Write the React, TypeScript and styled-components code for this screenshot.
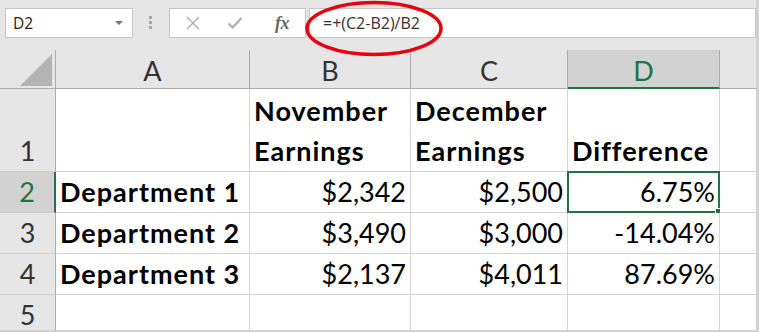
import React from 'react';
import styled, { createGlobalStyle } from 'styled-components';

const GREEN = '#217346';

const Global = createGlobalStyle`
  html, body { margin: 0; padding: 0; background: #fff; }
  * { box-sizing: border-box; }
`;

const Frame = styled.div`
  position: relative;
  width: 759px;
  height: 332px;
  overflow: hidden;
  border-right: 3px solid #d1d1d1;
  border-bottom: 2px solid #d1d1d1;
  background: #fff;
`;

const Toolbar = styled.div`
  display: flex;
  align-items: flex-start;
  height: 50px;
  padding: 8px 0 0 5px;
  background: #e6e6e6;
  font-family: 'Open Sans', 'Noto Sans', sans-serif;
`;

const NameBox = styled.div`
  display: flex;
  align-items: center;
  justify-content: space-between;
  width: 128px;
  height: 30px;
  padding: 0 9px 0 7px;
  background: #fff;
  border: 1px solid #c6c6c6;
  font-size: 15.5px;
  color: #222;
`;

const DropArrow = styled.span`
  width: 0;
  height: 0;
  border-left: 4px solid transparent;
  border-right: 4px solid transparent;
  border-top: 4px solid #777;
`;

const Grip = styled.div`
  display: flex;
  flex-direction: column;
  gap: 2px;
  margin: 8px 0 0 16px;
`;

const GripDot = styled.span`
  width: 3px;
  height: 3px;
  background: #a9a9a9;
`;

const ButtonsBox = styled.div`
  display: flex;
  align-items: center;
  width: 137px;
  height: 30px;
  margin-left: 17px;
  padding-left: 13px;
  background: #fff;
  border: 1px solid #c6c6c6;
`;

const IconSlot = styled.span<{ $gap?: number }>`
  display: flex;
  align-items: center;
  justify-content: center;
  width: 20px;
  height: 24px;
  margin-left: ${(p) => p.$gap ?? 0}px;
`;

const FxLabel = styled.span`
  font-family: 'Liberation Serif', 'DejaVu Serif', serif;
  font-style: italic;
  font-weight: 700;
  font-size: 18px;
  color: #6a6a6a;
  letter-spacing: -0.5px;
`;

const FormulaBox = styled.div`
  flex: 1;
  display: flex;
  align-items: center;
  height: 30px;
  margin-left: 3px;
  padding-left: 13px;
  background: #fff;
  border: 1px solid #c6c6c6;
  font-size: 16px;
  color: #333;
`;

const Annotation = styled.svg`
  position: absolute;
  left: 304px;
  top: 0;
  pointer-events: none;
`;

const Sheet = styled.div`
  display: grid;
  grid-template-columns: 56px 194px 161px 157px 152px 1fr;
  grid-template-rows: 39px 83px repeat(4, 41px);
  font-family: Lato, 'Open Sans', sans-serif;
  font-size: 27px;
`;

const Corner = styled.div`
  display: flex;
  align-items: flex-end;
  justify-content: flex-end;
  padding: 0 2px 1px 0;
  background: #e6e6e6;
  border-right: 1px solid #ababab;
  border-bottom: 1px solid #ababab;
`;

const ColHeader = styled.div<{ $active?: boolean; $edge?: boolean }>`
  display: flex;
  justify-content: center;
  align-items: flex-start;
  padding-top: 3px;
  line-height: 35px;
  background: ${(p) => (p.$active ? '#d2d2d2' : '#e6e6e6')};
  color: ${(p) => (p.$active ? GREEN : '#333')};
  border-right: ${(p) => (p.$edge ? 'none' : '1px solid #ababab')};
  border-bottom: ${(p) => (p.$active ? `2px solid ${GREEN}` : '1px solid #ababab')};
`;

const RowHeader = styled.div<{ $active?: boolean }>`
  display: flex;
  justify-content: center;
  align-items: flex-end;
  line-height: 40px;
  background: ${(p) => (p.$active ? '#d2d2d2' : '#e6e6e6')};
  color: ${(p) => (p.$active ? GREEN : '#333')};
  border-right: ${(p) => (p.$active ? `2px solid ${GREEN}` : '1px solid #ababab')};
  border-bottom: 1px solid #cfcfcf;
`;

const Cell = styled.div<{ $right?: boolean; $bold?: boolean; $edge?: boolean }>`
  position: relative;
  display: flex;
  flex-direction: column;
  justify-content: flex-end;
  align-items: ${(p) => (p.$right ? 'flex-end' : 'flex-start')};
  padding: 0 4px 0 4px;
  line-height: 40px;
  white-space: nowrap;
  font-weight: ${(p) => (p.$bold ? 700 : 400)};
  letter-spacing: ${(p) => (p.$bold ? '1px' : '0')};
  color: #000;
  background: #fff;
  border-right: ${(p) => (p.$edge ? 'none' : '1px solid #d4d4d4')};
  border-bottom: 1px solid #d4d4d4;
`;

const Line = styled.span`
  display: block;
`;

const Selection = styled.div`
  position: absolute;
  top: -1px;
  left: -1px;
  right: -1px;
  bottom: -1px;
  border: 2px solid ${GREEN};
  pointer-events: none;
`;

const FillHandle = styled.span`
  position: absolute;
  right: -4px;
  bottom: -4px;
  width: 7px;
  height: 7px;
  background: ${GREEN};
  border: 1px solid #fff;
`;

type Row = {
  n: number;
  label: string;
  b: string;
  c: string;
  d: string;
};

const dataRows: Row[] = [
  { n: 2, label: 'Department 1', b: '$2,342', c: '$2,500', d: '6.75%' },
  { n: 3, label: 'Department 2', b: '$3,490', c: '$3,000', d: '-14.04%' },
  { n: 4, label: 'Department 3', b: '$2,137', c: '$4,011', d: '87.69%' },
];

export default function App() {
  return (
    <Frame>
      <Global />
      <Toolbar>
        <NameBox>
          <span>D2</span>
          <DropArrow />
        </NameBox>
        <Grip>
          <GripDot />
          <GripDot />
          <GripDot />
        </Grip>
        <ButtonsBox>
          <IconSlot>
            <svg width="14" height="14" viewBox="0 0 14 14">
              <path d="M1 1 L13 13 M13 1 L1 13" stroke="#b3b3b3" strokeWidth="1.5" fill="none" />
            </svg>
          </IconSlot>
          <IconSlot $gap={22}>
            <svg width="16" height="14" viewBox="0 0 16 14">
              <path d="M1.5 7.5 L5.5 11.5 L14.5 2" stroke="#b3b3b3" strokeWidth="2.4" fill="none" />
            </svg>
          </IconSlot>
          <IconSlot $gap={27}>
            <FxLabel>fx</FxLabel>
          </IconSlot>
        </ButtonsBox>
        <FormulaBox>=+(C2-B2)/B2</FormulaBox>
      </Toolbar>
      <Annotation width="142" height="58" viewBox="0 0 142 58">
        <ellipse cx="70" cy="28.5" rx="67" ry="26" fill="none" stroke="#e8000b" strokeWidth="3.5" />
      </Annotation>
      <Sheet>
        <Corner>
          <svg width="33" height="33" viewBox="0 0 33 33">
            <polygon points="32,0 32,32 0,32" fill="#b4b4b4" />
          </svg>
        </Corner>
        <ColHeader>A</ColHeader>
        <ColHeader>B</ColHeader>
        <ColHeader>C</ColHeader>
        <ColHeader $active>D</ColHeader>
        <ColHeader $edge />

        <RowHeader>1</RowHeader>
        <Cell $bold />
        <Cell $bold>
          <Line>November</Line>
          <Line>Earnings</Line>
        </Cell>
        <Cell $bold>
          <Line>December</Line>
          <Line>Earnings</Line>
        </Cell>
        <Cell $bold>
          <Line>Difference</Line>
        </Cell>
        <Cell $edge />

        {dataRows.map((r) => (
          <React.Fragment key={r.n}>
            <RowHeader $active={r.n === 2}>{r.n}</RowHeader>
            <Cell $bold>{r.label}</Cell>
            <Cell $right>{r.b}</Cell>
            <Cell $right>{r.c}</Cell>
            <Cell $right>
              {r.d}
              {r.n === 2 && (
                <Selection>
                  <FillHandle />
                </Selection>
              )}
            </Cell>
            <Cell $edge />
          </React.Fragment>
        ))}

        <RowHeader>5</RowHeader>
        <Cell />
        <Cell />
        <Cell />
        <Cell />
        <Cell $edge />
      </Sheet>
    </Frame>
  );
}
